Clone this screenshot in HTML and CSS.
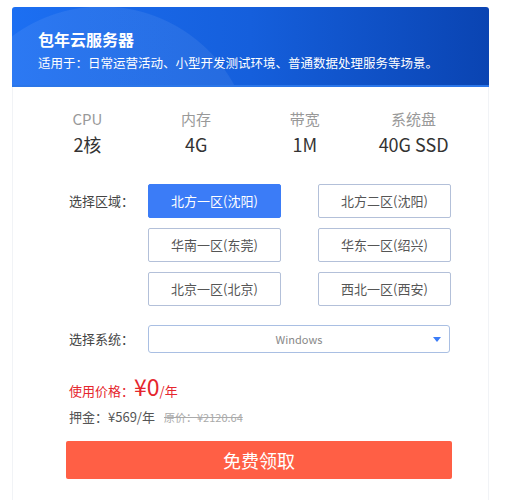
FILE: index.html
```html
<!DOCTYPE html>
<html lang="zh-CN">
<head>
<meta charset="utf-8">
<link rel="stylesheet" href="styles.css">
</head>
<body>
<div class="card">
  <div class="head">
    <div class="title">包年云服务器</div>
    <div class="sub">适用于：日常运营活动、小型开发测试环境、普通数据处理服务等场景。</div>
  </div>
  <div class="body">
    <div class="specs">
      <div class="spec"><div class="lbl">CPU</div><div class="val">2核</div></div>
      <div class="spec"><div class="lbl">内存</div><div class="val">4G</div></div>
      <div class="spec"><div class="lbl">带宽</div><div class="val">1M</div></div>
      <div class="spec"><div class="lbl">系统盘</div><div class="val">40G SSD</div></div>
    </div>
    <div class="form">
      <div class="row">
        <div class="flabel">选择区域：</div>
        <div class="regions">
          <div class="region active">北方一区(沈阳)</div>
          <div class="region">北方二区(沈阳)</div>
          <div class="region">华南一区(东莞)</div>
          <div class="region">华东一区(绍兴)</div>
          <div class="region">北京一区(北京)</div>
          <div class="region">西北一区(西安)</div>
        </div>
      </div>
      <div class="row sys">
        <div class="flabel">选择系统：</div>
        <div class="select"><span>Windows</span><i class="arrow"></i></div>
      </div>
      <div class="price"><span class="plabel">使用价格：</span><span class="pnum">¥0</span><span class="punit">/年</span></div>
      <div class="deposit">押金：¥569/年<span class="orig">原价：¥2120.64</span></div>
      <div class="btn">免费领取</div>
    </div>
  </div>
</div>
</body>
</html>
```
FILE: styles.css
```css
* { box-sizing: border-box; }
html, body { margin: 0; padding: 0; background: #fff; }
body {
  font-family: "Noto Sans CJK SC", "Noto Sans", sans-serif;
  color: #333;
}
.card {
  margin: 7px 0 0 12px;
  width: 477px;
}
.head {
  height: 80px;
  border-radius: 3px 3px 0 0;
  padding: 21px 0 0 26px;
  color: #fff;
  background:
    radial-gradient(circle at 90px 150px, rgba(255,255,255,0.07) 0, rgba(255,255,255,0.07) 150px, rgba(255,255,255,0) 151px),
    linear-gradient(90deg, #1c6ff2 0%, #155fdc 50%, #0a44b2 100%);
  border-bottom: 2px solid #2b76e8;
}
.title {
  font-size: 16px;
  font-weight: bold;
  line-height: 22px;
}
.sub {
  font-size: 12.5px;
  line-height: 18px;
  margin-top: 4px;
}
.body {
  border-left: 1px solid #f1f3f6;
  border-right: 1px solid #f1f3f6;
  padding: 21px 20px 30px;
  height: 420px;
}
.specs {
  display: grid;
  grid-template-columns: repeat(4, 1fr);
  text-align: center;
}
.lbl {
  font-size: 15px;
  color: #999;
  line-height: 22px;
}
.val {
  font-size: 18px;
  color: #333;
  line-height: 26px;
  margin-top: 1px;
}
.form {
  margin: 27px 0 0 33px;
  width: 386px;
}
.row {
  display: flex;
}
.flabel {
  width: 82px;
  padding-left: 3px;
  font-size: 13px;
  color: #444;
  line-height: 34px;
  flex: none;
}
.regions {
  display: grid;
  grid-template-columns: 133px 133px;
  column-gap: 37px;
  row-gap: 10px;
}
.region {
  height: 34px;
  border: 1px solid #b3c0d9;
  border-radius: 2px;
  font-size: 13px;
  color: #555;
  text-align: center;
  line-height: 32px;
}
.region.active {
  background: #3b7cf7;
  border-color: #3b7cf7;
  color: #fff;
}
.sys {
  margin-top: 19px;
}
.sys .flabel { line-height: 28px; }
.select {
  position: relative;
  width: 302px;
  height: 28px;
  border: 1px solid #a9bfe3;
  border-radius: 3px;
  text-align: center;
  font-size: 11px;
  color: #888;
  line-height: 26px;
}
.arrow {
  position: absolute;
  right: 8px;
  top: 11px;
  width: 0;
  height: 0;
  border-left: 4px solid transparent;
  border-right: 4px solid transparent;
  border-top: 5px solid #3b7cf7;
}
.price {
  margin-top: 18px;
  padding-left: 3px;
  color: #e5262e;
  line-height: 30px;
}
.plabel { font-size: 13px; }
.pnum { font-size: 23px; }
.punit { font-size: 13px; }
.deposit {
  margin-top: 0;
  padding-left: 3px;
  font-size: 13px;
  color: #555;
  line-height: 22px;
}
.orig {
  margin-left: 9px;
  font-size: 11px;
  color: #aaa;
  text-decoration: line-through;
}
.btn {
  margin-top: 13px;
  height: 38px;
  background: #ff5f45;
  border-radius: 2px;
  color: #fff;
  text-align: center;
  font-size: 18px;
  line-height: 38px;
}
```
